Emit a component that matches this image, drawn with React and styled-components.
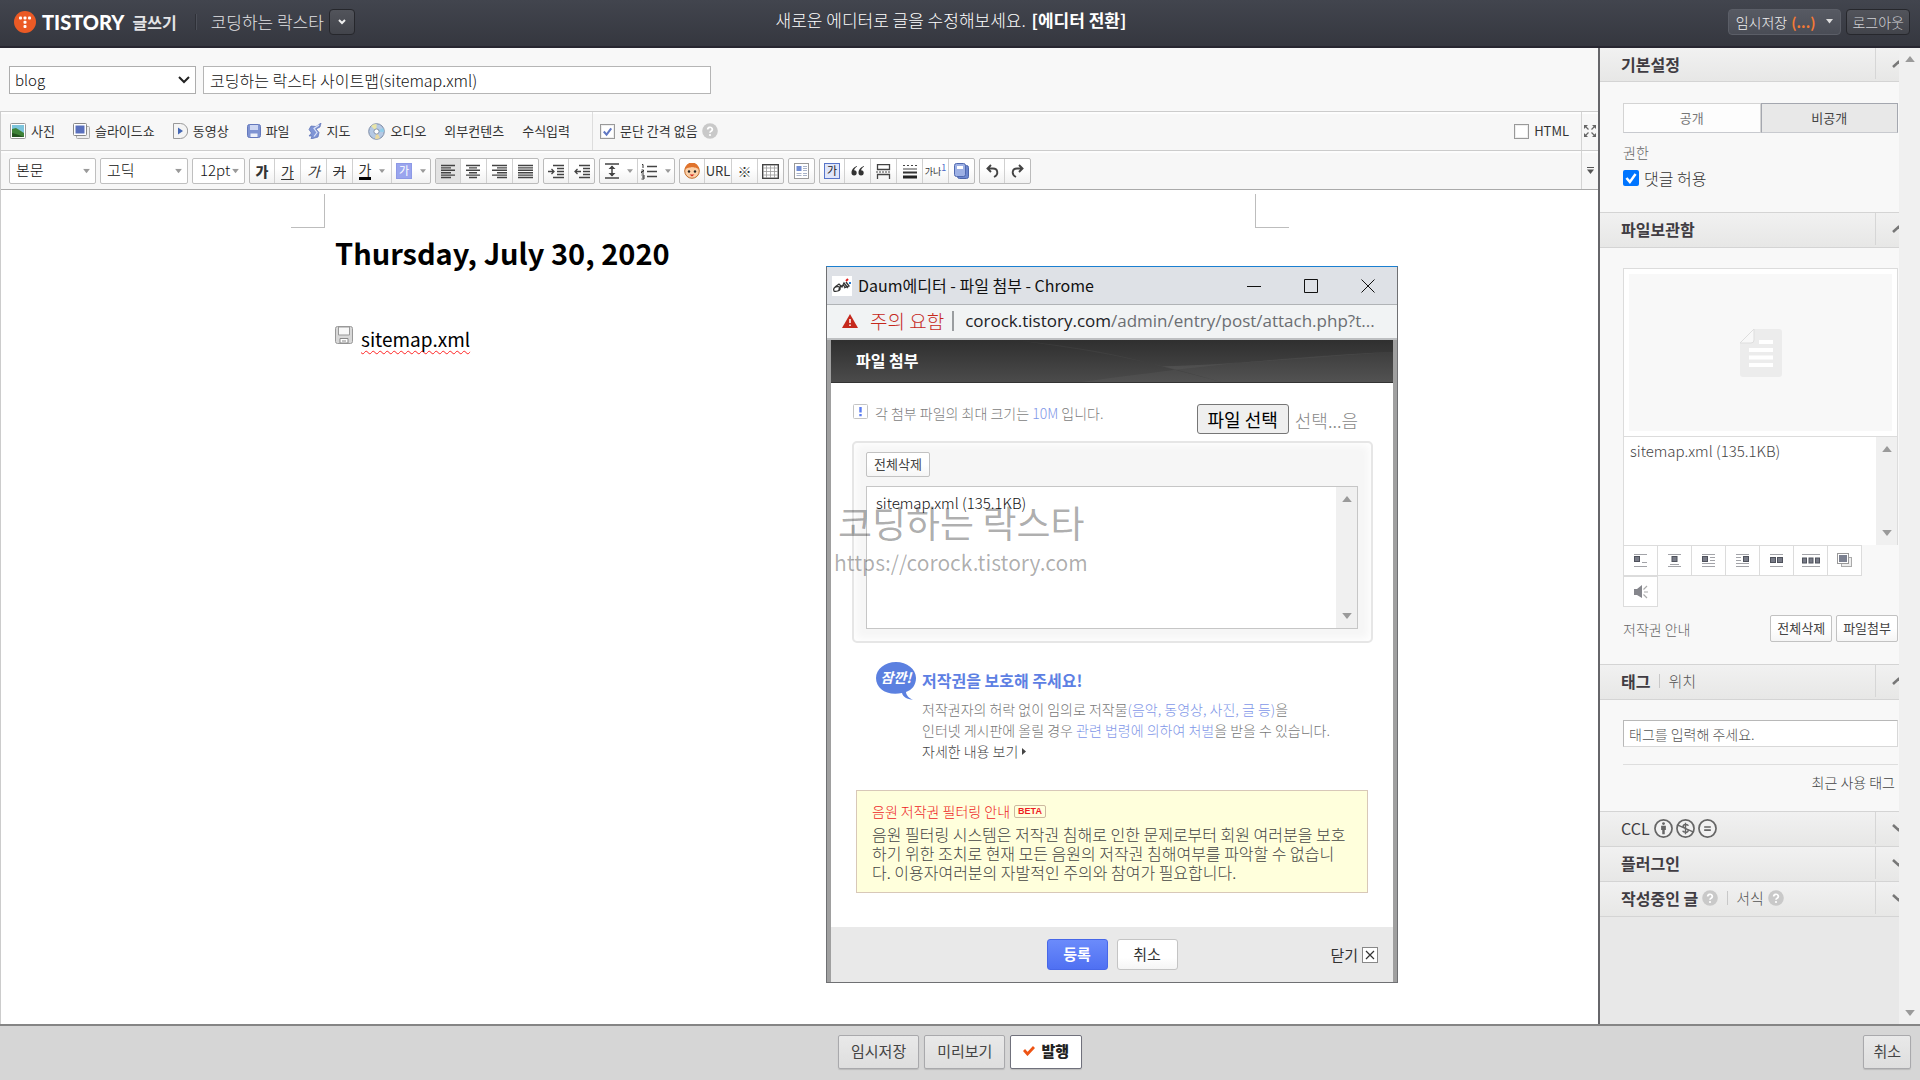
import React from "react";
import styled, { createGlobalStyle, css } from "styled-components";

const GlobalStyle = createGlobalStyle`
  *, *::before, *::after { box-sizing: border-box; }
  html, body { margin: 0; padding: 0; }
  body, button, input, select {
    font-family: "Noto Sans CJK KR", "Noto Sans", sans-serif;
  }
  body { background: #fff; color: #333; font-size: 14px; line-height: 20px; font-weight: 300; }
  button, input, select { margin: 0; font-weight: 300; line-height: 20px; }
  button { cursor: pointer; white-space: nowrap; }
  h1, h2, p, ul { margin: 0; padding: 0; }
  a { color: inherit; text-decoration: none; }
  svg { display: block; flex: none; }
`;

const Page = styled.div`
  height: 100vh;
  min-width: 1420px;
  display: flex;
  flex-direction: column;
  overflow: hidden;
  position: relative;
`;

/* ---------- top bar ---------- */

const TopBar = styled.header`
  flex: none;
  height: 48px;
  display: grid;
  grid-template-columns: 1fr auto 1fr;
  align-items: center;
  padding: 0 10px 3px 14px;
  color: #fff;
  background: linear-gradient(#42454e, #35373f);
  border-bottom: 2px solid #272630;
`;

const Brand = styled.div`
  display: flex;
  align-items: center;
`;

const Wordmark = styled.span`
  margin-left: 6px;
  font: 900 20px/24px Lato, sans-serif;
`;

const WriteLabel = styled.span`
  margin-left: 8px;
  font-size: 16px;
  font-weight: 700;
  color: #e4e4e6;
`;

const TopDivider = styled.i`
  width: 2px;
  height: 16px;
  margin: 0 14px 0 18px;
  background: #2e3037;
  border-right: 1px solid #4c4f58;
`;

const BlogName = styled.span`
  font-size: 17px;
  color: #e2e2e4;
`;

const DarkButton = styled.button`
  height: 26px;
  display: inline-flex;
  align-items: center;
  justify-content: center;
  padding: 0 ${(p) => p.$pad || 0}px;
  width: ${(p) => (p.$square ? "26px" : "auto")};
  margin-left: ${(p) => p.$gap || 0}px;
  border: 1px solid ${(p) => (p.$deep ? "#26272c" : "#5b5e67")};
  border-radius: 4px;
  background: ${(p) => (p.$deep ? "linear-gradient(#52545b, #42444b)" : "linear-gradient(#575a63, #4a4d56)")};
  color: ${(p) => (p.$dim ? "#d0d1d5" : "#f2f2f2")};
  font-size: 14px;
`;

const SaveCount = styled.span`
  margin: 0 11px 0 4px;
  color: #f37a35;
  font-weight: 700;
`;

const Notice = styled.p`
  padding: 0 22px 4px 0;
  font-size: 17px;
  a { margin-left: 2px; font-weight: 700; }
`;

const TopRight = styled.div`
  display: flex;
  justify-content: flex-end;
`;

/* ---------- frame ---------- */

const Body = styled.div`
  flex: 1;
  min-height: 0;
  display: flex;
`;

const EditorPane = styled.main`
  flex: 1;
  min-width: 0;
  display: flex;
  flex-direction: column;
  border-right: 2px solid #66666a;
`;

const TitleRow = styled.div`
  display: flex;
  gap: 7px;
  padding: 18px 9px 17px;
  background: #f8f8f8;
`;

const SelectWrap = styled.span`
  position: relative;
  width: ${(p) => p.$w}px;
  flex: none;
  svg {
    position: absolute;
    right: 6px;
    top: 50%;
    transform: translateY(-50%);
    pointer-events: none;
  }
`;

const CategorySelect = styled.select`
  appearance: none;
  width: 100%;
  height: 28px;
  padding: 0 24px 0 5px;
  border: 1px solid #adadad;
  border-radius: 0;
  background: #fff;
  color: #111;
  font-size: 15px;
`;

const TitleInput = styled.input`
  width: 508px;
  height: 28px;
  padding: 0 6px;
  border: 1px solid #b5b5b5;
  background: #fff;
  color: #111;
  font-size: 16px;
`;

const ToolRows = styled.div`
  flex: none;
  border-left: 1px solid #ccc;
`;

const ToolRow = styled.div`
  display: flex;
  height: ${(p) => (p.$last ? 40 : 39)}px;
  border-top: 1px solid #ccc;
  border-bottom: ${(p) => (p.$last ? "1px solid #aaa" : "0")};
  background: #f7f7f7;
  box-shadow: inset 0 2px 0 #fdfdfd;
`;

const Tools = styled.div`
  flex: 1;
  display: flex;
  align-items: center;
  gap: ${(p) => p.$gap || 0}px;
  padding-top: ${(p) => p.$top || 0}px;
  padding-left: ${(p) => p.$left || 0}px;
`;

const MediaButton = styled.button`
  display: inline-flex;
  align-items: center;
  gap: 5px;
  padding: 0;
  border: 0;
  background: none;
  color: #333;
  font-size: 13px;
  font-weight: 400;
`;

const ParagraphOption = styled.div`
  align-self: stretch;
  display: flex;
  align-items: center;
  gap: 4px;
  margin-left: 4px;
  padding-left: 7px;
  border-left: 1px solid #ddd;
`;

const CheckLabel = styled.label`
  display: inline-flex;
  align-items: center;
  gap: 5px;
  color: #333;
  font-size: ${(p) => p.$size || 13}px;
  font-weight: ${(p) => p.$weight || 400};
`;

const tick = (stroke) =>
  `url("data:image/svg+xml,%3Csvg xmlns='http://www.w3.org/2000/svg' viewBox='0 0 14 14'%3E%3Cpath d='M3 7l3 3.4L11 3.6' fill='none' stroke='%23${stroke}' stroke-width='2.2'/%3E%3C/svg%3E")`;

const Check = styled.input.attrs({ type: "checkbox" })`
  appearance: none;
  width: 15px;
  height: 15px;
  margin: 0;
  border: 1px solid #999;
  background: #fff;
  box-shadow: inset 0 0 0 1px #eee;
  &:checked { background: #fff ${tick("6078c4")} center / 13px no-repeat; }
  ${(p) =>
    p.$solid &&
    css`
      width: 16px;
      height: 16px;
      border: 0;
      border-radius: 2px;
      box-shadow: none;
      &:checked { background: #0075ff ${tick("fff")} center / 16px no-repeat; }
    `}
`;

const RowEnd = styled.div`
  display: flex;
  align-items: center;
  justify-content: center;
  width: 17px;
  border-left: 1px solid #d4d4d4;
`;

const HtmlOption = styled.div`
  display: flex;
  align-items: center;
  padding-right: 12px;
`;

const IconButton = styled.button`
  display: inline-flex;
  padding: 0;
  border: 0;
  background: none;
`;

const FormatSelect = styled.select`
  appearance: none;
  width: 100%;
  height: 26px;
  padding: 0 0 2px ${(p) => p.$pad || 6}px;
  border: 1px solid #bfbfbf;
  border-radius: 2px;
  background: #fff;
  color: #111;
  font-size: 15px;
`;

const Group = styled.div`
  display: flex;
  height: 26px;
  border: 1px solid #bbb;
  border-radius: 2px;
  background: linear-gradient(#fff 40%, #f1f1f1);
  overflow: hidden;
`;

const Tool = styled.button`
  flex: none;
  width: ${(p) => p.$w || 26}px;
  display: flex;
  align-items: center;
  justify-content: center;
  gap: 8px;
  padding: 0;
  border: 0;
  border-left: 1px solid #d0d0d0;
  background: ${(p) => (p.$on ? "#e2e2e2" : "none")};
  color: #333;
  font-size: 13px;
  font-weight: 400;
  &:first-child {
    width: ${(p) => p.$w || 24}px;
    border-left: 0;
  }
`;

const Glyph = styled.span`
  font-size: ${(p) => p.$size || 14}px;
  line-height: 15px;
  font-weight: ${(p) => (p.$bold ? 900 : 400)};
  font-style: ${(p) => (p.$italic ? "italic" : "normal")};
  text-decoration: ${(p) => p.$line || "none"};
  text-underline-offset: 2px;
  border-bottom: ${(p) => (p.$bar ? "3px solid #000" : "0")};
  sup { color: #4b68c8; font-size: 9px; line-height: 1px; }
`;

const Swatch = styled.span`
  width: 16px;
  height: 16px;
  background: ${(p) => p.$bg};
  color: ${(p) => p.$fg};
  border: 1px solid ${(p) => p.$bd};
  font-size: 11px;
  line-height: 13px;
  text-align: center;
`;

/* ---------- document ---------- */

const Canvas = styled.div`
  flex: 1;
  min-height: 0;
  padding: 4px 0 0 290px;
  border-left: 1px solid #ccc;
  background: #fff;
`;

const Guides = styled.div`
  display: flex;
  justify-content: space-between;
  width: 998px;
`;

const Guide = styled.i`
  width: 34px;
  height: 34px;
  border: 0 solid #bdbdbd;
  border-width: ${(p) => (p.$right ? "0 0 1px 1px" : "0 1px 1px 0")};
`;

const Doc = styled.article`
  padding: 4px 44px 0;
  color: #000;
`;

const DocTitle = styled.h1`
  font-size: 29px;
  line-height: 40px;
  font-weight: 700;
`;

const Attachment = styled.a`
  display: inline-flex;
  align-items: flex-start;
  gap: 8px;
  margin-top: 54px;
  font-size: 19px;
  line-height: 26px;
  font-weight: 400;
  color: #000;
  span { text-decoration: underline wavy #f22 1px; text-underline-offset: 3px; text-decoration-skip-ink: none; }
`;

/* ---------- sidebar ---------- */

const Sidebar = styled.aside`
  flex: none;
  width: 320px;
  display: flex;
  background: #e8e8e8;
`;

const SideContent = styled.div`
  flex: 1;
  min-width: 0;
  overflow: hidden;
`;

const ScrollTrack = styled.div`
  flex: none;
  width: 21px;
  display: flex;
  flex-direction: column;
  align-items: center;
  justify-content: space-between;
  padding: ${(p) => p.$pad || 8}px 0;
  background: #f0f0f0;
`;

const SideHeader = styled.h2`
  display: flex;
  align-items: center;
  height: ${(p) => (p.$first ? 34 : 35)}px;
  padding: 0 0 2px 21px;
  font-size: 16px;
  line-height: 20px;
  font-weight: ${(p) => (p.$light ? 400 : 700)};
  color: #403c42;
  background: linear-gradient(#f1f1f1, #e7e7e6);
  border-bottom: 1px solid #d4d4d4;
`;

const Other = styled.span`
  margin-left: 9px;
  padding-left: 8px;
  line-height: 14px;
  border-left: 1px solid #c8c8c8;
  font-weight: 300;
  font-size: 15px;
  color: #555;
`;

const HeaderIcons = styled.span`
  display: flex;
  gap: 3px;
  margin-left: 4px;
`;

const Fold = styled.button`
  align-self: stretch;
  width: 24px;
  margin-left: auto;
  padding: 0 0 0 16px;
  border: 0;
  border-left: 1px solid #d6d6d6;
  background: none;
  overflow: hidden;
`;

const Section = styled.section`
  padding: ${(p) => p.$pad};
  background: #f8f8f8;
  border-bottom: 1px solid #d4d4d4;
`;

const Segments = styled.div`
  display: flex;
  height: 30px;
`;

const Segment = styled.button`
  flex: 1;
  border: ${(p) => (p.$on ? "1px solid #a4a7af" : "1px solid #d4d4d4")};
  border-bottom-color: #c8cacf;
  background: ${(p) => (p.$on ? "#e8e8e8" : "#fdfdfd")};
  color: ${(p) => (p.$on ? "#444" : "#777")};
  font-size: 13px;
  font-weight: 400;
`;

const Caption = styled.p`
  margin: 9px 0 6px;
  color: #666;
  font-size: 14px;
`;

const Preview = styled.div`
  height: 169px;
  display: flex;
  align-items: center;
  justify-content: center;
  border: 1px solid #dcdcdc;
  box-shadow: inset 0 0 0 5px #fff;
`;

const FileList = styled.div`
  display: flex;
  height: ${(p) => p.$h}px;
  border: 1px solid ${(p) => p.$bd || "#dcdcdc"};
  border-width: ${(p) => (p.$open ? "0 1px" : "1px")};
  background: #fff;
`;

const FileNames = styled.ul`
  flex: 1;
  padding: ${(p) => p.$pad};
  list-style: none;
  font-size: 15px;
  color: ${(p) => p.$color};
`;

const AlignGrid = styled.div`
  display: flex;
  flex-wrap: wrap;
  padding-right: 24px;
`;

const AlignButton = styled.button`
  width: 35px;
  height: 31px;
  margin-right: -1px;
  display: flex;
  align-items: center;
  justify-content: center;
  padding: 0;
  border: 1px solid #dcdcdc;
  background: #fff;
`;

const FileActions = styled.div`
  display: flex;
  align-items: center;
  gap: 4px;
  margin-top: 8px;
  color: #666;
  a { margin-right: auto; }
`;

const SmallButton = styled.button`
  height: ${(p) => p.$h || 27}px;
  padding: 0 ${(p) => p.$pad || 6}px 1px;
  border: 1px solid #c2c2c2;
  border-radius: 2px;
  background: linear-gradient(#fff 50%, #f5f5f5);
  color: #444;
  font-size: 13px;
  font-weight: 400;
`;

const TagInput = styled.input`
  display: block;
  width: 100%;
  height: 27px;
  padding: 0 5px;
  border: 1px solid #c4c4c4;
  border-color: #b8b8b8 #d8d8d8 #d8d8d8 #b8b8b8;
  background: #fff;
  font-size: 14px;
  &::placeholder { color: #555; }
`;

const RecentTags = styled.div`
  margin-top: 17px;
  padding: 7px 3px 0 0;
  border-top: 1px solid #dedede;
  text-align: right;
  color: #444;
`;

/* ---------- popup window ---------- */

const Popup = styled.section`
  position: absolute;
  left: 826px;
  top: 266px;
  width: 572px;
  border: 1px solid #6f7073;
  border-top-color: #1b7fd0;
  background: #a0a0a0;
`;

const WindowBar = styled.div`
  display: flex;
  align-items: center;
  height: 38px;
  padding-left: 5px;
  border-bottom: 1px solid #b0b3b6;
  background: #dee1e6;
  color: #111;
  font-size: 16px;
  gap: 6px;
`;

const WindowTitle = styled.span`
  flex: 1;
  padding-bottom: 1px;
  font-weight: 400;
`;

const WindowButton = styled.button`
  width: 50px;
  height: 36px;
  display: flex;
  align-items: center;
  justify-content: center;
  padding: 0;
  border: 0;
  background: none;
`;

const WindowButtons = styled.div`
  display: flex;
  gap: 7px;
  padding-right: 4px;
`;

const AddressBar = styled.div`
  display: flex;
  align-items: center;
  height: 35px;
  padding: 0 15px 2px;
  border-bottom: 2px solid #bdbfc1;
  background: #f1f3f4;
  font-size: 19px;
  line-height: 24px;
  color: #6b6e72;
  white-space: nowrap;
`;

const Warning = styled.span`
  margin-left: 12px;
  padding-right: 8px;
  border-right: 2px solid #9a9da0;
  line-height: 20px;
  color: #c5281c;
`;

const Url = styled.span`
  margin-left: 11px;
  font: 400 17px/24px "Open Sans", "Noto Sans", sans-serif;
  b { font-weight: 400; color: #202124; }
`;

const PopupPage = styled.div`
  margin: 0 4px;
  background: #fff;
`;

const PopupHead = styled.h2`
  position: relative;
  height: 43px;
  padding: 10px 25px;
  font-size: 16px;
  line-height: 20px;
  font-weight: 700;
  color: #fff;
  background: linear-gradient(#2f2f2f, #4b4b4b);
  border-bottom: 1px solid #333;
  svg { position: absolute; inset: 0; width: 100%; height: 100%; }
  span { position: relative; }
`;

const UploadRow = styled.div`
  display: flex;
  padding: 21px 35px 5px 22px;
  color: #7d7d7d;
`;

const UploadHint = styled.p`
  flex: 1;
  display: flex;
  gap: 7px;
  line-height: 18px;
`;

const Blue = styled.span`
  color: #7f97e8;
`;

const ChooseFile = styled.button`
  height: 30px;
  margin-right: 6px;
  padding: 0 10px;
  border: 1px solid #767676;
  border-radius: 3px;
  background: #efefef;
  color: #000;
  font-size: 18px;
  font-weight: 400;
`;

const Chosen = styled.span`
  color: #888;
  font-size: 18px;
  line-height: 32px;
`;

const ListPanel = styled.div`
  margin: 0 20px 0 21px;
  padding: 9px 13px 12px 12px;
  border: 2px solid #e6e6e6;
  border-radius: 5px;
  background: #f6f6f6;
  box-shadow: inset 0 0 8px 2px #fff;
`;

const ListSpacer = styled.div`
  margin-top: 9px;
`;

const Copyright = styled.div`
  display: flex;
  gap: 6px;
  padding: 19px 45px 0;
`;

const Bubble = styled.span`
  position: relative;
  flex: none;
  width: 40px;
  height: 38px;
  em {
    position: absolute;
    inset: 5px 0 auto;
    text-align: center;
    color: #fff;
    font-size: 14px;
    line-height: 20px;
    font-weight: 700;
  }
`;

const CopyText = styled.div`
  padding-top: 8px;
  line-height: 21px;
  color: #777;
  white-space: nowrap;
  h2 { margin-bottom: 9px; font-size: 16px; line-height: 20px; font-weight: 700; color: #5d80e3; }
  a { display: inline-flex; align-items: center; gap: 4px; color: #444; }
`;

const FilterBox = styled.div`
  margin: 28px 25px 34px;
  padding: 11px 15px 10px;
  border: 1px solid #d8c8b8;
  background: #ffffdc;
  color: #444;
  font-size: 16px;
  line-height: 19px;
  white-space: nowrap;
`;

const FilterTitle = styled.p`
  display: flex;
  align-items: center;
  gap: 4px;
  margin-bottom: 4px;
  font-size: 14px;
  color: #ee1c24;
`;

const Beta = styled.span`
  padding: 0 3px;
  border: 1px solid #cdb9a0;
  border-radius: 2px;
  font: 700 9px/11px "Liberation Sans", Arial, sans-serif;
`;

const PopupFoot = styled.div`
  display: grid;
  grid-template-columns: 1fr auto 1fr;
  align-items: center;
  height: 55px;
  padding: 0 15px;
  background: #e9e9e9;
`;

const FootButtons = styled.div`
  grid-column: 2;
  display: flex;
  gap: 9px;
`;

const FootButton = styled.button`
  width: 61px;
  height: 31px;
  padding: 0 0 2px;
  border: 1px solid ${(p) => (p.$primary ? "#4767e8" : "#c4c4c4")};
  border-radius: 3px;
  background: ${(p) => (p.$primary ? "linear-gradient(#6b8bfb, #4f70f2)" : "linear-gradient(#fff 60%, #f5f5f5)")};
  color: ${(p) => (p.$primary ? "#fff" : "#333")};
  font-size: 15px;
  font-weight: ${(p) => (p.$primary ? 700 : 400)};
`;

const CloseButton = styled.button`
  justify-self: end;
  display: flex;
  align-items: center;
  gap: 4px;
  padding: 0;
  border: 0;
  background: none;
  color: #333;
  font-size: 15px;
  font-weight: 400;
`;

const Watermark = styled.div`
  position: absolute;
  left: 834px;
  top: 499px;
  color: rgba(0, 0, 0, 0.32);
  font-weight: 400;
  pointer-events: none;
  white-space: nowrap;
  p:first-child { padding-left: 4px; font-size: 37px; line-height: 46px; }
  p:last-child { font-size: 21px; line-height: 34px; }
`;

/* ---------- bottom bar ---------- */

const BottomBar = styled.footer`
  flex: none;
  height: 56px;
  display: grid;
  grid-template-columns: 1fr auto 1fr;
  align-items: center;
  padding: 0 9px 3px;
  border-top: 2px solid #858585;
  background: #d6d6d6;
`;

const BottomCenter = styled.div`
  grid-column: 2;
  display: flex;
  gap: 5px;
`;

const BottomButton = styled.button`
  display: inline-flex;
  align-items: center;
  gap: 6px;
  height: 34px;
  padding: 0 ${(p) => p.$pad || 12}px 2px;
  justify-self: ${(p) => (p.$end ? "end" : "auto")};
  border: 1px solid ${(p) => (p.$main ? "#70717c" : "#a9a9ac")};
  border-radius: 2px;
  background: ${(p) => (p.$main ? "#fff" : "linear-gradient(#e9e9e9, #dedede)")};
  box-shadow: 0 1px 1px #bbb;
  color: ${(p) => (p.$main ? "#222" : "#444")};
  font-size: 15px;
  font-weight: ${(p) => (p.$main ? 900 : 400)};
`;

/* ---------- drawings ---------- */

const Tri = ({ w = 8, c = "#9a9a9a", up }) => (
  <svg width={w} height={w / 2 + 1} viewBox="0 0 8 5">
    <path d={up ? "M0 5h8L4 0z" : "M0 0h8L4 5z"} fill={c} />
  </svg>
);

const ScrollArrows = ({ pad }) => (
  <ScrollTrack $pad={pad}>
    <Tri w={10} up />
    <Tri w={10} />
  </ScrollTrack>
);

const Lines = ({ rows }) => (
  <svg width="15" height="15" viewBox="0 0 15 15">
    {rows.map(([x, w], i) => (
      <path key={i} d={`M${x} ${1.5 + i * 2.4}h${w}`} stroke="#444" strokeWidth="1.4" />
    ))}
  </svg>
);

const Help = () => (
  <svg width="16" height="16" viewBox="0 0 16 16" role="img" aria-label="도움말">
    <circle cx="8" cy="8" r="7.8" fill="#c9c9c9" />
    <path d="M5.7 6.4a2.3 2.1 0 1 1 3.4 1.8c-.8.4-1.1.8-1.1 1.6" fill="none" stroke="#fff" strokeWidth="1.7" />
    <circle cx="8" cy="12" r="1.1" fill="#fff" />
  </svg>
);

const mediaIcons = {
  photo: (
    <svg width="16" height="16" viewBox="0 0 16 16">
      <rect x=".5" y=".5" width="15" height="15" rx="1" fill="#fff" stroke="#999" />
      <path d="M2 2h12v12H2z" fill="#7cc4dc" />
      <path d="M2 6l4-1 8 5v4H2z" fill="#3f8238" />
      <path d="M2 10l4 1 8 3H2z" fill="#24521f" />
    </svg>
  ),
  slides: (
    <svg width="17" height="16" viewBox="0 0 17 16">
      <rect x="3.5" y="3.5" width="13" height="12" rx="1" fill="#eee" stroke="#aaa" />
      <rect x=".5" y=".5" width="13" height="12" rx="1" fill="#fff" stroke="#888" />
      <path d="M2.5 2.5h9v8h-9z" fill="#5a70bd" />
    </svg>
  ),
  video: (
    <svg width="15" height="16" viewBox="0 0 15 16">
      <path d="M.5.5h7a7 7.3 0 0 1 0 15h-7z" fill="#f4f4f4" stroke="#999" />
      <path d="M5 4.5L10 8l-5 3.5z" fill="#4467b4" />
    </svg>
  ),
  file: (
    <svg width="14" height="14" viewBox="0 0 14 14">
      <rect x=".5" y=".5" width="13" height="13" rx="2" fill="#7f93d2" stroke="#6478bc" />
      <path d="M3 1h8v5H3z" fill="#cdd6f2" />
      <path d="M3.500 9.500h7V13h-7z" fill="#eef1fa" />
    </svg>
  ),
  map: (
    <svg width="14" height="16" viewBox="0 0 14 16">
      <path d="M13 0l-1 4-4 2 3 3.500L10 14l-7 2 1-3H1l2.500-3L1 6.500 3 3l5 .5z" fill="#7f95d6" stroke="#5a70b6" strokeWidth=".7" />
      <path d="M11 2L6 5.500l3 4-3 4" fill="none" stroke="#dce3f8" strokeWidth="1.200" />
    </svg>
  ),
  audio: (
    <svg width="17" height="17" viewBox="0 0 17 17">
      <circle cx="8.500" cy="8.500" r="7.800" fill="#b5c9e4" stroke="#7e8da6" />
      <path d="M8.500 8.500L3 3a8 8 0 0 1 5.500-2z" fill="#e9e6a8" />
      <path d="M8.500 8.500L15 5a8 8 0 0 1 1 4z" fill="#8fcdea" />
      <path d="M8.500 8.500L12 15a8 8 0 0 1-5 .8z" fill="#ead9a0" />
      <circle cx="8.500" cy="8.500" r="2.600" fill="#fff" stroke="#8795ae" />
    </svg>
  ),
};

const Chevron = ({ up }) => (
  <svg width="14" height="10" viewBox="0 0 14 10">
    <path d={up ? "M1 8l5.500-5L12 8" : "M1 2l5.500 5L12 2"} fill="none" stroke="#777" strokeWidth="2.600" />
  </svg>
);

const alignDrawings = [
  { lines: "M0 1.500h13M8 9.500h5M0 13.500h13", boxes: [[0, 4]] },
  { lines: "M0 1.500h13M2 11.500h9M0 13.500h13", boxes: [[3.500, 4]] },
  { lines: "M0 1.500h13M8 4.500h5M8 7.500h5M0 10.500h13M0 13.500h13", boxes: [[0, 4]] },
  { lines: "M0 1.500h13M0 4.500h5M0 7.500h5M0 10.500h13M0 13.500h13", boxes: [[7, 4]] },
  { lines: "M0 1.500h13M0 13.500h13", boxes: [[0, 5], [7, 5]] },
];

const AlignIcon = ({ lines, boxes }) => (
  <svg width="13" height="15" viewBox="0 0 13 15">
    <path d={lines} stroke="#a2a3a8" />
    {boxes.map(([x, y]) => (
      <rect key={x} x={x + 0.5} y={y - 0.5} width="5" height="5" fill="#777a86" stroke="#4f525c" />
    ))}
  </svg>
);

const TripleIcon = () => (
  <svg width="18" height="15" viewBox="0 0 18 15">
    <path d="M0 1.500h18M0 13.500h18" stroke="#a2a3a8" />
    {[0, 6.500, 13].map((x) => (
      <rect key={x} x={x + 0.5} y="5" width="4" height="5" fill="#777a86" stroke="#4f525c" />
    ))}
  </svg>
);

const StackIcon = () => (
  <svg width="16" height="15" viewBox="0 0 16 15">
    <rect x="4.500" y="4.500" width="10" height="9" fill="#eee" stroke="#aaa" />
    <rect x=".5" y=".5" width="11" height="10" fill="#fff" stroke="#999" />
    <path d="M2 2h8v7H2z" fill="#7b8090" />
  </svg>
);

const SpeakerIcon = () => (
  <svg width="14" height="14" viewBox="0 0 14 14">
    <path d="M0 4h3l5-4v13L3 10H0z" fill="#85868c" />
    <path d="M9.500 4.500L13 1M10 7h4M9.500 9.500L13 13" stroke="#aaa" strokeWidth="1.200" />
  </svg>
);

const CclIcon = ({ kind }) => (
  <svg width="19" height="19" viewBox="0 0 20 20">
    <circle cx="10" cy="10" r="9" fill="#f2f2f2" stroke="#666" strokeWidth="1.800" />
    {kind === "by" && (
      <>
        <circle cx="10" cy="4.800" r="1.500" fill="#666" />
        <path d="M7.500 7h5v4.500h-1.200V16H8.700v-4.500H7.500z" fill="#666" />
      </>
    )}
    {kind === "nc" && (
      <path d="M13 7c-.5-1.500-5.500-2-5.500.7 0 2.500 5.300 1.800 5.300 4.400 0 2.700-5 2.300-5.800.3M10 4v12M2 6.500l16 7" fill="none" stroke="#666" strokeWidth="1.500" />
    )}
    {kind === "nd" && <path d="M6.500 8.300h7M6.500 11.700h7" stroke="#666" strokeWidth="1.600" />}
  </svg>
);

/* ---------- parts ---------- */

const FoldHeader = ({ children, up, light, first }) => (
  <SideHeader $light={light} $first={first}>
    {children}
    <Fold aria-label={up ? "접기" : "펼치기"}>
      <Chevron up={up} />
    </Fold>
  </SideHeader>
);

const FormatPicker = ({ label, value, w, pad }) => (
  <SelectWrap $w={w}>
    <FormatSelect aria-label={label} $pad={pad}>
      <option>{value}</option>
    </FormatSelect>
    <Tri w={7} />
  </SelectWrap>
);

const media = [
  ["photo", "사진"],
  ["slides", "슬라이드쇼"],
  ["video", "동영상"],
  ["file", "파일"],
  ["map", "지도"],
  ["audio", "오디오"],
  [null, "외부컨텐츠"],
  [null, "수식입력"],
];

const FormatBar = () => (
  <Tools $left={8} $gap={4} $top={2}>
    <FormatPicker label="문단 모양" value="본문" w={87} />
    <FormatPicker label="글꼴" value="고딕" w={88} />
    <FormatPicker label="글자 크기" value="12pt" w={53} pad={7} />
    <Group>
      <Tool aria-label="굵게"><Glyph $bold>가</Glyph></Tool>
      <Tool aria-label="밑줄"><Glyph $line="underline">가</Glyph></Tool>
      <Tool aria-label="기울임"><Glyph $italic>가</Glyph></Tool>
      <Tool aria-label="취소선"><Glyph $line="line-through">가</Glyph></Tool>
      <Tool $w={39} aria-label="글자색"><Glyph $bar>가</Glyph><Tri w={6} /></Tool>
      <Tool $w={39} aria-label="배경색"><Swatch $bg="#9aa5ee" $fg="#fff" $bd="#8d99e6">가</Swatch><Tri w={6} /></Tool>
    </Group>
    <Group>
      <Tool $on aria-label="왼쪽 정렬"><Lines rows={[[0, 14], [0, 10], [0, 14], [0, 10], [0, 14], [0, 10]]} /></Tool>
      <Tool aria-label="가운데 정렬"><Lines rows={[[0, 14], [3, 8], [0, 14], [3, 8], [0, 14], [3, 8]]} /></Tool>
      <Tool aria-label="오른쪽 정렬"><Lines rows={[[0, 15], [5, 10], [0, 15], [5, 10], [0, 15], [5, 10]]} /></Tool>
      <Tool aria-label="양쪽 정렬"><Lines rows={[[0, 15], [0, 15], [0, 15], [0, 15], [0, 15], [0, 15]]} /></Tool>
    </Group>
    <Group>
      <Tool aria-label="들여쓰기">
        <svg width="16" height="15" viewBox="0 0 16 15">
          <path d="M5 1.500h11M9 4.500h7M9 7.500h7M9 10.500h7M5 13.500h11" fill="none" stroke="#444" strokeWidth="1.300" />
          <path d="M0 7.500h6M3.500 5l2.500 2.500L3.500 10" fill="none" stroke="#444" strokeWidth="1.300" />
        </svg>
      </Tool>
      <Tool aria-label="내어쓰기">
        <svg width="16" height="15" viewBox="0 0 16 15">
          <path d="M5 1.500h11M9 4.500h7M9 7.500h7M9 10.500h7M5 13.500h11" fill="none" stroke="#444" strokeWidth="1.300" />
          <path d="M1 7.500h6M3.500 5L1 7.500 3.500 10" fill="none" stroke="#444" strokeWidth="1.300" />
        </svg>
      </Tool>
    </Group>
    <Group>
      <Tool $w={37} aria-label="줄 간격">
        <svg width="14" height="16" viewBox="0 0 14 16">
          <path d="M0 1h14M0 15h14M7 3v10" stroke="#444" strokeWidth="1.500" />
          <path d="M3.500 6L7 2.500 10.500 6zM3.500 10L7 13.500 10.500 10z" fill="#444" />
        </svg>
        <Tri w={6} />
      </Tool>
      <Tool $w={37} aria-label="번호 매기기">
        <svg width="16" height="17" viewBox="0 0 16 17">
          <path d="M6 3.500h10M6 8.500h10M6 13.500h10" stroke="#444" strokeWidth="1.300" />
          <path d="M1 1.500h1V5M.5 7h2v1.500h-2V10h2.500M.5 12h2.500v4H.5M1 14h2" fill="none" stroke="#333" />
        </svg>
        <Tri w={6} />
      </Tool>
    </Group>
    <Group>
      <Tool aria-label="이모티콘">
        <svg width="16" height="16" viewBox="0 0 16 16">
          <circle cx="8" cy="8" r="7.300" fill="#fbd0a8" stroke="#c06b2a" />
          <path d="M1 6.500a7 7 0 0 1 14 0C12 4 10 5 8 4 6 5 4 4 1 6.500z" fill="#e0732c" />
          <circle cx="5" cy="8.500" r="1.200" fill="#222" />
          <circle cx="11" cy="8.500" r="1.200" fill="#222" />
          <path d="M5.500 11.500h5l-2.500 2z" fill="#d4261c" />
        </svg>
      </Tool>
      <Tool $w={27}>URL</Tool>
      <Tool aria-label="특수문자"><Glyph>※</Glyph></Tool>
      <Tool aria-label="표">
        <svg width="17" height="15" viewBox="0 0 17 15">
          <rect x=".7" y=".7" width="15.600" height="13.600" fill="#fff" stroke="#444" strokeWidth="1.400" />
          <path d="M1 4h15M1 7.500h15M1 11h15M4.500 1v13M8.500 1v13M12.500 1v13" stroke="#999" strokeWidth=".8" />
        </svg>
      </Tool>
    </Group>
    <Group>
      <Tool $w={25} aria-label="서식">
        <svg width="15" height="16" viewBox="0 0 15 16">
          <rect x=".5" y=".5" width="14" height="15" fill="#fff" stroke="#999" />
          <path d="M2.500 3h5v5h-5z" fill="#6f8bd4" />
          <path d="M9 3.500h4M9 5.500h4M9 7.500h4M2.500 10.500h5M2.500 12.500h5M9 10.500h4M9 12.500h4" stroke="#a9b3c8" />
        </svg>
      </Tool>
    </Group>
    <Group>
      <Tool aria-label="글상자"><Swatch $bg="#dfe6fa" $fg="#222" $bd="#5875c9">가</Swatch></Tool>
      <Tool aria-label="인용구">
        <svg width="14" height="10" viewBox="0 0 14 10">
          <path d="M6 0C3 1 .5 3.500.5 6.800a2.600 2.600 0 1 0 2.600-2.600C3.500 2.700 4.500 1.500 6 .8zM13 0C10 1 7.500 3.500 7.500 6.800a2.600 2.600 0 1 0 2.600-2.600C10.500 2.700 11.500 1.500 13 .8z" fill="#333" />
        </svg>
      </Tool>
      <Tool aria-label="더보기">
        <svg width="15" height="15" viewBox="0 0 15 15">
          <path d="M1.500 5.500v-5h12v5zM1.500 15v-4.500h12V15" fill="none" stroke="#444" strokeWidth="1.300" />
          <path d="M0 8h15" stroke="#444" strokeDasharray="2 1" />
        </svg>
      </Tool>
      <Tool aria-label="구분선">
        <svg width="14" height="15" viewBox="0 0 14 15">
          <path d="M0 1.500h14" stroke="#444" strokeDasharray="2 2" />
          <path d="M0 5h14" stroke="#444" />
          <path d="M0 8.500h14" stroke="#333" strokeWidth="2" />
          <path d="M0 13h14" stroke="#222" strokeWidth="3" />
        </svg>
      </Tool>
      <Tool aria-label="각주"><Glyph $size={9}>가나<sup>1</sup></Glyph></Tool>
      <Tool aria-label="사전">
        <svg width="15" height="16" viewBox="0 0 15 16">
          <rect x="3.500" y="2.500" width="11" height="13" rx="2" fill="#6d87cf" stroke="#4d66ac" />
          <rect x=".5" y=".5" width="11" height="13" rx="2" fill="#9db0e4" stroke="#5069b0" />
          <path d="M3 3h6v3H3z" fill="#fff" />
        </svg>
      </Tool>
    </Group>
    <Group>
      <Tool aria-label="실행 취소">
        <svg width="13" height="14" viewBox="0 0 13 14">
          <path d="M5 1L1.500 4.500 5 8M2 4.500h5c5 0 6 6 1 8.500" fill="none" stroke="#444" strokeWidth="1.900" />
        </svg>
      </Tool>
      <Tool aria-label="다시 실행">
        <svg width="13" height="14" viewBox="0 0 13 14">
          <path d="M8 1l3.500 3.500L8 8M11 4.500H6c-5 0-6 6-1 8.500" fill="none" stroke="#444" strokeWidth="1.900" />
        </svg>
      </Tool>
    </Group>
  </Tools>
);

const Header = () => (
  <TopBar>
    <Brand>
      <svg width="22" height="22" viewBox="0 0 22 22">
        <circle cx="11" cy="11" r="11" fill="#eb5a25" />
        {[[6.500, 7], [11, 7], [15.500, 7], [11, 11.200], [11, 15.400]].map(([x, y]) => (
          <rect key={`${x}-${y}`} x={x - 1.5} y={y - 1.5} width="3" height="3" rx="1" fill="#fff" />
        ))}
      </svg>
      <Wordmark>TISTORY</Wordmark>
      <WriteLabel>글쓰기</WriteLabel>
      <TopDivider />
      <BlogName>코딩하는 락스타</BlogName>
      <DarkButton $deep $square $gap={5} aria-label="블로그 선택">
        <svg width="8" height="6" viewBox="0 0 8 6">
          <path d="M1 1l3 3 3-3" fill="none" stroke="#eee" strokeWidth="2" />
        </svg>
      </DarkButton>
    </Brand>
    <Notice>
      새로운 에디터로 글을 수정해보세요. <a href="#editor">[에디터 전환]</a>
    </Notice>
    <TopRight>
      <DarkButton $pad={7}>
        임시저장<SaveCount>(...)</SaveCount>
        <Tri w={7} c="#ddd" />
      </DarkButton>
      <DarkButton $deep $dim $pad={5} $gap={5}>로그아웃</DarkButton>
    </TopRight>
  </TopBar>
);

const SidePanel = () => (
  <Sidebar>
    <SideContent>
      <FoldHeader up first>기본설정</FoldHeader>
      <Section $pad="21px 1px 22px 23px">
        <Segments>
          <Segment>공개</Segment>
          <Segment $on>비공개</Segment>
        </Segments>
        <Caption>권한</Caption>
        <CheckLabel $size={16} $weight={300}>
          <Check $solid defaultChecked />
          댓글 허용
        </CheckLabel>
      </Section>
      <FoldHeader up>파일보관함</FoldHeader>
      <Section $pad="20px 1px 22px 23px">
        <Preview>
          <svg width="42" height="48" viewBox="0 0 42 48">
            <path d="M14 0h25a3 3 0 0 1 3 3v42a3 3 0 0 1-3 3H3a3 3 0 0 1-3-3V14z" fill="#ececec" />
            <path d="M14 0v11a3 3 0 0 1-3 3H0z" fill="#f8f8f8" stroke="#dedede" />
            <path d="M19 13h14M9 21h24M9 28.500h24M9 36h24" stroke="#fff" strokeWidth="4" />
          </svg>
        </Preview>
        <FileList $h={108} $open>
          <FileNames $pad="4px 6px" $color="#444"><li>sitemap.xml (135.1KB)</li></FileNames>
          <ScrollArrows pad={9} />
        </FileList>
        <AlignGrid>
          {alignDrawings.map((d, i) => (
            <AlignButton key={i} aria-label={`배치 ${i + 1}`}><AlignIcon {...d} /></AlignButton>
          ))}
          <AlignButton aria-label="세 장 배치"><TripleIcon /></AlignButton>
          <AlignButton aria-label="슬라이드 배치"><StackIcon /></AlignButton>
          <AlignButton aria-label="소리"><SpeakerIcon /></AlignButton>
        </AlignGrid>
        <FileActions>
          <a href="#copyright">저작권 안내</a>
          <SmallButton>전체삭제</SmallButton>
          <SmallButton>파일첨부</SmallButton>
        </FileActions>
      </Section>
      <FoldHeader up>태그<Other>위치</Other></FoldHeader>
      <Section $pad="20px 1px 19px 23px">
        <TagInput aria-label="태그" placeholder="태그를 입력해 주세요." />
        <RecentTags><a href="#tags">최근 사용 태그</a></RecentTags>
      </Section>
      <FoldHeader light>
        CCL
        <HeaderIcons>
          <CclIcon kind="by" />
          <CclIcon kind="nc" />
          <CclIcon kind="nd" />
        </HeaderIcons>
      </FoldHeader>
      <FoldHeader>플러그인</FoldHeader>
      <FoldHeader>
        작성중인 글<HeaderIcons><Help /></HeaderIcons>
        <Other>서식</Other>
        <HeaderIcons><Help /></HeaderIcons>
      </FoldHeader>
    </SideContent>
    <ScrollArrows />
  </Sidebar>
);

const AttachWindow = () => (
  <Popup aria-label="파일 첨부">
    <WindowBar>
      <svg width="20" height="20" viewBox="0 0 20 20">
        <path d="M0 0h20v20H0z" fill="#fff" />
        <path d="M2 15c-2-4 5-6 6-3s-5 4-6 3zM7 14c0-4 5-6 6-3M3 11l4-3 3 3 2-4 4 5M12 12l5-2-3-4" fill="none" stroke="#333" strokeWidth="1.300" />
        <path d="M14 5l2-2" stroke="#e02020" strokeWidth="2" />
        <path d="M17 7h2" stroke="#2a7ad0" strokeWidth="2" />
      </svg>
      <WindowTitle>Daum에디터 - 파일 첨부 - Chrome</WindowTitle>
      <WindowButtons>
        <WindowButton aria-label="최소화">
          <svg width="14" height="14" viewBox="0 0 14 14"><path d="M0 7.500h14" stroke="#111" /></svg>
        </WindowButton>
        <WindowButton aria-label="최대화">
          <svg width="14" height="14" viewBox="0 0 14 14"><path d="M.5.5h13v13H.5z" fill="none" stroke="#111" /></svg>
        </WindowButton>
        <WindowButton aria-label="창 닫기">
          <svg width="14" height="14" viewBox="0 0 14 14"><path d="M.5.5l13 13M13.500.5l-13 13" stroke="#111" /></svg>
        </WindowButton>
      </WindowButtons>
    </WindowBar>
    <AddressBar>
      <svg width="16" height="14" viewBox="0 0 16 14">
        <path d="M8 0l8 14H0z" fill="#c5281c" />
        <path d="M8 5v4M8 10.500V12" stroke="#fff" strokeWidth="1.500" />
      </svg>
      <Warning>주의 요함</Warning>
      <Url><b>corock.tistory.com</b>/admin/entry/post/attach.php?t...</Url>
    </AddressBar>
    <PopupPage>
      <PopupHead>
        <svg viewBox="0 0 562 43" preserveAspectRatio="none">
          <path d="M180 0C260 10 320 22 390 43H562V12C480 16 420 24 330 27 290 15 240 5 180 0z" fill="#fff" opacity=".04" />
          <path d="M562 12C480 16 400 22 250 43H390C360 35 345 31 330 27 420 24 480 18 562 12z" fill="#fff" opacity=".04" />
        </svg>
        <span>파일 첨부</span>
      </PopupHead>
      <UploadRow>
        <UploadHint>
          <svg width="15" height="15" viewBox="0 0 15 15">
            <rect x=".5" y=".5" width="14" height="14" rx="1" fill="#fff" stroke="#c4c4c4" />
            <path d="M7.500 3v5.500M7.500 10v2.200" stroke="#5b7cf0" strokeWidth="2.400" />
          </svg>
          <span>각 첨부 파일의 최대 크기는 <Blue>10M</Blue> 입니다.</span>
        </UploadHint>
        <ChooseFile>파일 선택</ChooseFile>
        <Chosen>선택...음</Chosen>
      </UploadRow>
      <ListPanel>
        <SmallButton $h={25} $pad={7}>전체삭제</SmallButton>
        <ListSpacer>
          <FileList $h={143} $bd="#c6c6c6">
            <FileNames $pad="6px 9px" $color="#111"><li>sitemap.xml (135.1KB)</li></FileNames>
            <ScrollArrows pad={9} />
          </FileList>
        </ListSpacer>
      </ListPanel>
      <Copyright>
        <Bubble>
          <svg width="40" height="38" viewBox="0 0 40 38">
            <path d="M20 0c11 0 20 7 20 16 0 7-4 12-10 14 0 3 3 6 7 8-6-1-10-3-11-7C11 34 0 27 0 16 0 7 9 0 20 0z" fill="#5b80e0" />
          </svg>
          <em>잠깐!</em>
        </Bubble>
        <CopyText>
          <h2>저작권을 보호해 주세요!</h2>
          <p>저작권자의 허락 없이 임의로 저작물<Blue>(음악, 동영상, 사진, 글 등)</Blue>을</p>
          <p>인터넷 게시판에 올릴 경우 <Blue>관련 법령에 의하여 처벌</Blue>을 받을 수 있습니다.</p>
          <a href="#more">
            자세한 내용 보기
            <svg width="4" height="7" viewBox="0 0 4 7"><path d="M0 0l4 3.500L0 7z" fill="#444" /></svg>
          </a>
        </CopyText>
      </Copyright>
      <FilterBox>
        <FilterTitle>음원 저작권 필터링 안내<Beta>BETA</Beta></FilterTitle>
        <p>음원 필터링 시스템은 저작권 침해로 인한 문제로부터 회원 여러분을 보호</p>
        <p>하기 위한 조치로 현재 모든 음원의 저작권 침해여부를 파악할 수 없습니</p>
        <p>다. 이용자여러분의 자발적인 주의와 참여가 필요합니다.</p>
      </FilterBox>
      <PopupFoot>
        <FootButtons>
          <FootButton $primary>등록</FootButton>
          <FootButton>취소</FootButton>
        </FootButtons>
        <CloseButton>
          닫기
          <svg width="16" height="16" viewBox="0 0 16 16">
            <rect x=".5" y=".5" width="15" height="15" fill="#fff" stroke="#888" />
            <path d="M4 4l8 8M12 4l-8 8" stroke="#333" strokeWidth="1.200" />
          </svg>
        </CloseButton>
      </PopupFoot>
    </PopupPage>
  </Popup>
);

export default function App() {
  return (
    <Page>
      <GlobalStyle />
      <Header />
      <Body>
        <EditorPane>
          <TitleRow>
            <SelectWrap $w={187}>
              <CategorySelect aria-label="카테고리">
                <option>blog</option>
              </CategorySelect>
              <svg width="12" height="8" viewBox="0 0 12 8">
                <path d="M1 1l5 5 5-5" fill="none" stroke="#222" strokeWidth="2" />
              </svg>
            </SelectWrap>
            <TitleInput aria-label="제목" defaultValue="코딩하는 락스타 사이트맵(sitemap.xml)" />
          </TitleRow>
          <ToolRows>
            <ToolRow>
              <Tools $left={9} $gap={18}>
                {media.map(([icon, label]) => (
                  <MediaButton key={label}>
                    {icon && mediaIcons[icon]}
                    {label}
                  </MediaButton>
                ))}
                <ParagraphOption>
                  <CheckLabel>
                    <Check defaultChecked />
                    문단 간격 없음
                  </CheckLabel>
                  <Help />
                </ParagraphOption>
              </Tools>
              <HtmlOption>
                <CheckLabel>
                  <Check />
                  HTML
                </CheckLabel>
              </HtmlOption>
              <RowEnd>
                <IconButton aria-label="전체 화면">
                  <svg width="12" height="12" viewBox="0 0 12 12">
                    <path d="M0 0h4L0 4zM12 0v4L8 0zM0 12V8l4 4zM12 12H8l4-4z" fill="#666" />
                    <path d="M1 1l3.500 3.500M11 1L7.500 4.500M1 11l3.500-3.500M11 11L7.500 7.500" stroke="#666" strokeWidth="1.200" />
                  </svg>
                </IconButton>
              </RowEnd>
            </ToolRow>
            <ToolRow $last>
              <FormatBar />
              <RowEnd>
                <IconButton aria-label="도구 더보기">
                  <svg width="7" height="7" viewBox="0 0 7 7">
                    <path d="M0 .5h7" stroke="#555" />
                    <path d="M0 2.500h7L3.500 7z" fill="#555" />
                  </svg>
                </IconButton>
              </RowEnd>
            </ToolRow>
          </ToolRows>
          <Canvas>
            <Guides>
              <Guide />
              <Guide $right />
            </Guides>
            <Doc>
              <DocTitle>Thursday, July 30, 2020</DocTitle>
              <Attachment href="#sitemap">
                <svg width="18" height="18" viewBox="0 0 18 18">
                  <rect x=".5" y=".5" width="17" height="17" rx="2" fill="#d8d8d8" stroke="#999" />
                  <path d="M3.500 1h11v8h-11z" fill="#f8f8f8" stroke="#999" />
                  <path d="M5 12.500h8V17H5zM7 15h4" fill="#fff" stroke="#888" />
                </svg>
                <span>sitemap.xml</span>
              </Attachment>
            </Doc>
          </Canvas>
        </EditorPane>
        <SidePanel />
      </Body>
      <BottomBar>
        <BottomCenter>
          <BottomButton>임시저장</BottomButton>
          <BottomButton>미리보기</BottomButton>
          <BottomButton $main>
            <svg width="12" height="10" viewBox="0 0 12 10">
              <path d="M1 4l3.500 4L11 1" fill="none" stroke="#ee5414" strokeWidth="2.800" />
            </svg>
            발행
          </BottomButton>
        </BottomCenter>
        <BottomButton $end $pad={9}>취소</BottomButton>
      </BottomBar>
      <AttachWindow />
      <Watermark>
        <p>코딩하는 락스타</p>
        <p>https://corock.tistory.com</p>
      </Watermark>
    </Page>
  );
}
